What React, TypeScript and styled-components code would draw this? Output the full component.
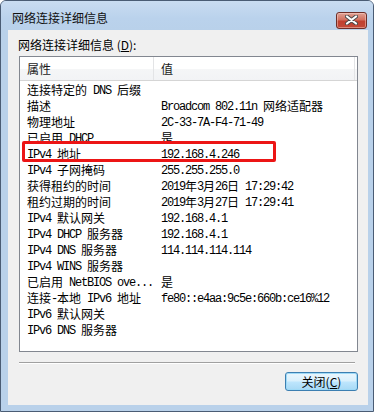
import React from 'react';
import styled, { createGlobalStyle } from 'styled-components';

const GlobalStyle = createGlobalStyle`
  html, body {
    margin: 0;
    padding: 0;
    background: #ffffff;
  }
  body {
    font-family: "Noto Sans CJK SC", "Noto Sans", sans-serif;
    font-size: 12px;
    color: #000;
  }
`;

const Window = styled.div`
  width: 372px;
  height: 410px;
  border: 1px solid #4a5c74;
  border-radius: 6px 6px 0 0;
  background: #b9d1ea;
  display: flex;
  flex-direction: column;
  overflow: hidden;
`;

const TitleBar = styled.div`
  height: 29px;
  display: flex;
  align-items: center;
  justify-content: space-between;
  padding: 0 6px 0 11px;
  background: linear-gradient(#c9dcf1, #bad2ec 60%, #b9d1ea);
`;

const TitleText = styled.span`
  font-size: 12px;
  line-height: 14px;
  padding-top: 5px;
  color: #111;
`;

const CloseButton = styled.div`
  width: 29px;
  height: 15px;
  margin-top: 9px;
  border: 1px solid #6e2e27;
  border-radius: 3px;
  display: flex;
  align-items: center;
  justify-content: center;
  background: linear-gradient(#e0a396 0%, #d2705f 45%, #c0402f 55%, #c24a39 100%);
  box-shadow: inset 0 0 0 1px rgba(255, 220, 210, 0.45);
`;

const Frame = styled.div`
  flex: 1;
  display: flex;
  padding: 0 5px 6px 7px;
`;

const Client = styled.div`
  width: 360px;
  height: 375px;
  box-sizing: border-box;
  background: #f0f0f0;
  display: flex;
  flex-direction: column;
  padding: 8px 10px 0 11px;
`;

const Label = styled.div`
  height: 14px;
  line-height: 14px;
  margin-left: -1px;
  font-size: 12px;
`;

const ListBox = styled.div`
  position: relative;
  margin-top: 4px;
  width: 339px;
  height: 296px;
  box-sizing: border-box;
  border: 1px solid #828790;
  background: #ffffff;
`;

const Header = styled.div`
  display: grid;
  grid-template-columns: 134px 201px;
  height: 23px;
  border-bottom: 1px solid #d5d5d5;
  background: linear-gradient(#ffffff 0%, #ffffff 50%, #f5f6f7 51%, #f2f3f5 100%);
`;

const HeaderCell = styled.div`
  display: flex;
  align-items: center;
  padding-left: 7px;
  border-right: 1px solid #e3e4e6;
  font-size: 12px;
  color: #1a1a1a;
`;

const Rows = styled.div`
  padding-top: 1px;
  display: flex;
  flex-direction: column;
`;

const Row = styled.div`
  display: grid;
  grid-template-columns: 134px 201px;
  height: 16px;
  line-height: 16px;
  white-space: nowrap;
`;

const Cell = styled.div`
  padding-left: 7px;
  overflow: hidden;
  font-size: 12px;
`;

const Latin = styled.span`
  font-family: "Liberation Mono", monospace;
  font-size: 12px;
  letter-spacing: -1.2px;
  white-space: pre;
  vertical-align: 1px;
`;

const Highlight = styled.div`
  position: absolute;
  left: 2px;
  top: 84px;
  width: 254px;
  height: 21px;
  box-sizing: border-box;
  border: 3px solid #ec1515;
  border-radius: 2px;
  pointer-events: none;
`;

const Separator = styled.div`
  margin-top: 10px;
  width: 336px;
  height: 1px;
  background: #a0a0a0;
  border-bottom: 1px solid #ffffff;
`;

const ButtonRow = styled.div`
  display: flex;
  justify-content: flex-end;
  margin-top: 8px;
`;

const Button = styled.div`
  width: 73px;
  height: 19px;
  box-sizing: border-box;
  border: 1px solid #3c7fb1;
  border-radius: 3px;
  display: flex;
  align-items: center;
  justify-content: center;
  font-size: 12px;
  background: linear-gradient(#eaf6fd 0%, #d9f0fc 48%, #bee6fd 52%, #a7d9f5 100%);
  box-shadow: inset 0 0 0 1px #9fdaf7;
`;

const cjk = /[\u2E80-\u9FFF\uFF00-\uFFEF]/;

const runs = (text: string) =>
  text
    .split(/([\u2E80-\u9FFF\uFF00-\uFFEF]+)/)
    .filter(Boolean)
    .map((part, i) => (cjk.test(part) ? <span key={i}>{part}</span> : <Latin key={i}>{part}</Latin>));

const details: [string, string][] = [
  ['连接特定的 DNS 后缀', ''],
  ['描述', 'Broadcom 802.11n 网络适配器'],
  ['物理地址', '2C-33-7A-F4-71-49'],
  ['已启用 DHCP', '是'],
  ['IPv4 地址', '192.168.4.246'],
  ['IPv4 子网掩码', '255.255.255.0'],
  ['获得租约的时间', '2019年3月26日 17:29:42'],
  ['租约过期的时间', '2019年3月27日 17:29:41'],
  ['IPv4 默认网关', '192.168.4.1'],
  ['IPv4 DHCP 服务器', '192.168.4.1'],
  ['IPv4 DNS 服务器', '114.114.114.114'],
  ['IPv4 WINS 服务器', ''],
  ['已启用 NetBIOS ove...', '是'],
  ['连接-本地 IPv6 地址', 'fe80::e4aa:9c5e:660b:ce16%12'],
  ['IPv6 默认网关', ''],
  ['IPv6 DNS 服务器', ''],
];

const CloseIcon = () => (
  <svg width="13" height="10" viewBox="0 0 13 10">
    <path d="M2 1.5 L11 8.5 M11 1.5 L2 8.5" stroke="#4b4b4b" strokeWidth="4" strokeLinecap="round" />
    <path d="M2 1.5 L11 8.5 M11 1.5 L2 8.5" stroke="#ffffff" strokeWidth="2.2" strokeLinecap="round" />
  </svg>
);

const App: React.FC = () => (
  <>
    <GlobalStyle />
    <Window>
      <TitleBar>
        <TitleText>网络连接详细信息</TitleText>
        <CloseButton>
          <CloseIcon />
        </CloseButton>
      </TitleBar>
      <Frame>
        <Client>
          <Label>
            网络连接详细信息 (<u>D</u>):
          </Label>
          <ListBox>
            <Header>
              <HeaderCell>属性</HeaderCell>
              <HeaderCell>值</HeaderCell>
            </Header>
            <Rows>
              {details.map(([name, value]) => (
                <Row key={name}>
                  <Cell>{runs(name)}</Cell>
                  <Cell>{runs(value)}</Cell>
                </Row>
              ))}
            </Rows>
            <Highlight />
          </ListBox>
          <Separator />
          <ButtonRow>
            <Button>
              关闭(<u>C</u>)
            </Button>
          </ButtonRow>
        </Client>
      </Frame>
    </Window>
  </>
);

export default App;
